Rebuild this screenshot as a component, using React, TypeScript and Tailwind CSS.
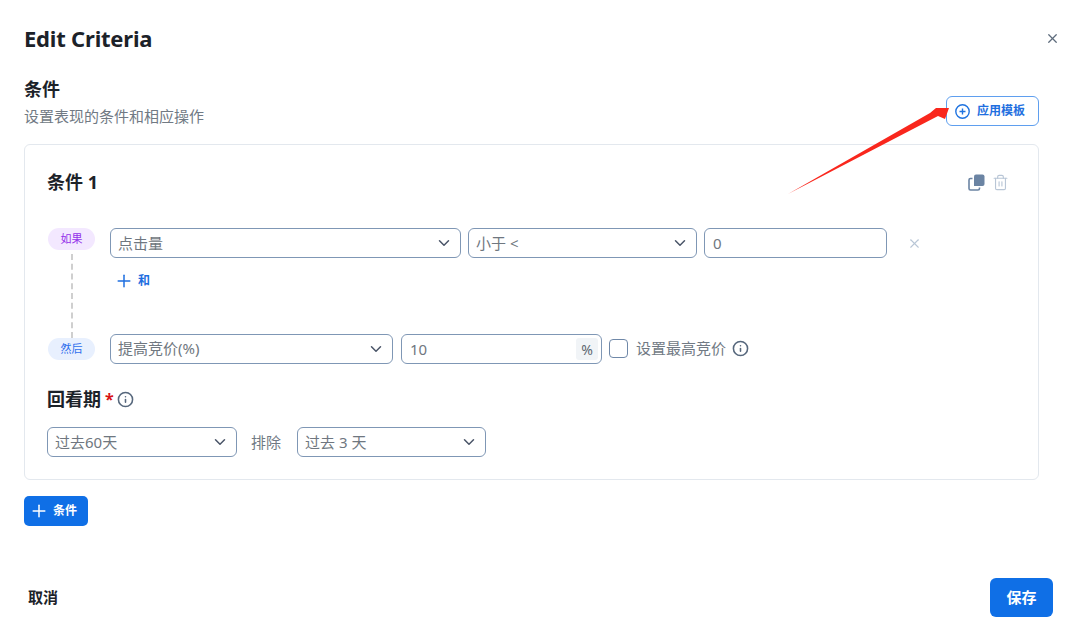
import { ChevronDown, Info, Plus, Trash2, X } from 'lucide-react';
import { clsx } from 'clsx';

const CJK = 'font-["Noto_Sans","Noto_Sans_CJK_SC",sans-serif]';

function Select({ label, className }: { label: string; className: string }) {
  return (
    <div className={clsx('flex h-[30px] shrink-0 items-center justify-between rounded-[6px] border border-[#7f97b5] bg-white pl-[7px] pr-[7px] text-[15px] text-[#6f7780]', className)}>
      <span>{label}</span>
      <ChevronDown className="h-[18px] w-[18px] text-[#4a5568]" strokeWidth={2} />
    </div>
  );
}

function Pill({ label, className }: { label: string; className: string }) {
  return (
    <div className={clsx('flex h-[22px] w-[47px] items-center justify-center rounded-full text-[11px]', className)}>
      {label}
    </div>
  );
}

function CopyIcon() {
  return (
    <svg width="17" height="17" viewBox="0 0 17 17">
      <path d="M6 2.5a2 2 0 0 1 2-2h6.5a2 2 0 0 1 2 2V10a2 2 0 0 1-2 2H6z" fill="#6b84a3" />
      <path d="M4.5 4.5H2.5a1.5 1.5 0 0 0-1.5 1.5v8.5A1.5 1.5 0 0 0 2.500 16H10a1.500 1.500 0 0 0 1.500-1.500v-1" fill="none" stroke="#6b84a3" strokeWidth="1.6" />
    </svg>
  );
}

export default function App() {
  return (
    <div className={clsx('relative flex h-[643px] w-[1080px] flex-col overflow-hidden bg-white pl-[24px] pr-[41px] text-[#1c2229]', CJK)}>
      {/* Header */}
      <div className="flex h-[78px] items-start justify-between pt-[23px]">
        <h1 className="text-[22px] font-bold leading-[30px] tracking-[-0.2px]">Edit Criteria</h1>
        <X className="mr-[-21px] mt-[8px] h-[15px] w-[15px] text-[#5d6b7c]" strokeWidth={2} />
      </div>

      {/* Section title */}
      <div className="flex h-[66px] items-start justify-between">
        <div>
          <h2 className="text-[18px] font-bold leading-[22px]">条件</h2>
          <p className="mt-[5px] text-[15px] leading-[22px] text-[#717a84]">设置表现的条件和相应操作</p>
        </div>
        <button className="mt-[18px] flex h-[30px] w-[93px] items-center gap-[7px] rounded-[6px] border-[1.5px] border-[#5f9fef] pl-[8px] text-[12px] font-bold text-[#1f6fe0]">
          <svg width="15" height="15" viewBox="0 0 15 15" fill="none" stroke="#1f73e0" strokeWidth="1.4">
            <circle cx="7.500" cy="7.500" r="6.700" />
            <path d="M7.500 4.500v6M4.500 7.500h6" />
          </svg>
          应用模板
        </button>
      </div>

      {/* Card */}
      <div className="h-[336px] w-[1015px] rounded-[6px] border border-[#e3e8ee] px-[22px]">
        <div className="flex h-[83px] items-start justify-between pt-[25px]">
          <h3 className="text-[18px] font-bold leading-[24px]">条件 1</h3>
          <div className="mr-[7px] mt-[4px] flex items-center gap-[7px]">
            <CopyIcon />
            <Trash2 className="h-[17px] w-[17px] text-[#b9c6d6]" strokeWidth={1.6} />
          </div>
        </div>

        {/* If / then rows */}
        <div className="flex">
          <div className="flex w-[63px] flex-col items-start pl-px">
            <Pill label="如果" className="bg-[#f3e8ff] text-[#9333ea]" />
            <div className="ml-[23px] mt-[4px] h-[84px] border-l-2 border-dashed border-[#cfcfcf]" />
            <Pill label="然后" className="bg-[#e8f0fe] text-[#2f6fed]" />
          </div>
          <div>
            <div className="flex items-center gap-[7px]">
              <Select label="点击量" className="w-[351px]" />
              <Select label="小于 <" className="w-[229px]" />
              <div className="flex h-[30px] w-[183px] items-center rounded-[6px] border border-[#7f97b5] pl-[8px] text-[15px] text-[#6f7780]">0</div>
              <X className="ml-[13px] h-[15px] w-[15px] text-[#b9c6d6]" strokeWidth={1.8} />
            </div>
            <div className="mt-[14px] flex h-[18px] items-center gap-[4px] pl-[4px] text-[12px] font-bold text-[#1f6fe0]">
              <Plus className="h-[20px] w-[20px]" strokeWidth={1.8} />
              和
            </div>
            <div className="mt-[43px] flex items-center">
              <Select label="提高竞价(%)" className="w-[283px]" />
              <div className="ml-[8px] mt-px flex h-[30px] w-[201px] items-center justify-between rounded-[6px] border border-[#7f97b5] pl-[8px] pr-[3px] text-[15px] text-[#6f7780]">
                <span>10</span>
                <span className="flex h-[22px] w-[22px] items-center justify-center rounded-[3px] bg-[#f1f4f7] text-[14px] text-[#5d6670]">%</span>
              </div>
              <div className="ml-[7px] h-[19px] w-[19px] rounded-[4px] border border-[#6f88a8]" />
              <span className="ml-[8px] text-[15px] text-[#717a84]">设置最高竞价</span>
              <Info className="ml-[6px] h-[17px] w-[17px] text-[#56677c]" strokeWidth={2.2} />
            </div>
          </div>
        </div>

        {/* Lookback */}
        <div className="mt-[22px] flex h-[26px] items-center">
          <span className="text-[18px] font-bold">回看期</span>
          <span className="ml-[4px] text-[16px] font-bold text-[#d81313]">*</span>
          <Info className="ml-[3px] h-[17px] w-[17px] text-[#56677c]" strokeWidth={2.2} />
        </div>
        <div className="mt-[15px] flex items-center">
          <Select label="过去60天" className="w-[190px]" />
          <span className="ml-[14px] w-[46px] text-[15px] text-[#717a84]">排除</span>
          <Select label="过去 3 天" className="w-[189px]" />
        </div>
      </div>

      <button className="mt-[16px] flex h-[30px] w-[64px] items-center gap-[4px] rounded-[5px] bg-[#0f6fe6] pl-[5px] text-[12px] font-bold text-white">
        <Plus className="h-[20px] w-[20px]" strokeWidth={1.8} />
        条件
      </button>

      {/* Footer */}
      <div className="mr-[-14px] mt-[52px] flex items-center justify-between">
        <span className="ml-[4px] text-[15px] font-bold">取消</span>
        <button className="h-[39px] w-[63px] rounded-[6px] bg-[#0f6fe6] text-[15px] font-bold text-white">保存</button>
      </div>

      {/* Annotation arrow */}
      <svg className="pointer-events-none absolute left-[780px] top-[95px]" width="180" height="105" viewBox="0 0 180 105">
        <path d="M8 99 L150 18 L156 13 L169 13 L165 24 L158 21 Z" fill="#f9271d" />
      </svg>
    </div>
  );
}
